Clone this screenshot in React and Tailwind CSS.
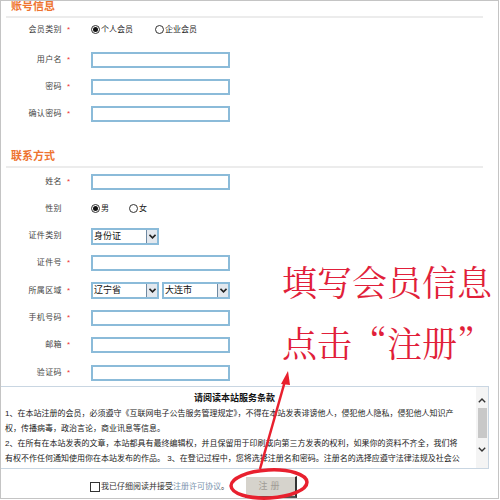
import { useState } from 'react'

const font = { fontFamily: '"Liberation Sans","Noto Sans CJK SC",sans-serif' }

function Radio({ checked }) {
  return (
    <span className="inline-flex w-[9px] h-[9px] rounded-full border border-[#333] bg-white items-center justify-center mr-[1px]">
      {checked && <span className="w-[5px] h-[5px] rounded-full bg-[#111]" />}
    </span>
  )
}

function Field() {
  return <div className="w-[139px] h-[16px] border-2 border-[#8bbbd9] bg-white" />
}

function Select({ value, w }) {
  return (
    <div className={`flex items-center h-[17px] border-2 border-[#8bbbd9] bg-white ${w}`}>
      <span className="flex-1 pl-[1px] text-[9px] text-[#111] leading-none">{value}</span>
      <span className="w-[11px] h-full bg-[#e3e8ee] border-l border-[#6f8aa3] flex items-center justify-center">
        <svg width="7" height="5" viewBox="0 0 7 5"><path d="M0.5 0.8 L3.5 3.8 L6.5 0.8" fill="none" stroke="#222" strokeWidth="1.6" /></svg>
      </span>
    </div>
  )
}

function Row({ label, req = true, h = 'h-[27.3px]', children }) {
  return (
    <div className={`flex items-center ${h}`}>
      <div className="w-[61px] text-right text-[8px] text-[#444] tracking-[0.4px]">{label}</div>
      <div className="w-[29px] pl-[5px] text-[8px] text-[#e33]">{req ? '*' : ''}</div>
      <div className="flex items-center">{children}</div>
    </div>
  )
}

function Heading({ children, className = '' }) {
  return (
    <div className={className}>
      <div className="pl-[10px] text-[11px] leading-[14px] font-bold text-[#ee7430]">{children}</div>
      <div className="ml-[5px] w-[477px] h-[2px] bg-[#ececec] mt-[3px]" />
    </div>
  )
}

export default function App() {
  const [agree] = useState(false)
  const terms = [
    '1、在本站注册的会员，必须遵守《互联网电子公告服务管理规定》，不得在本站发表诽谤他人，侵犯他人隐私，侵犯他人知识产',
    '权，传播病毒，政治言论，商业讯息等信息。',
    '2、在所有在本站发表的文章，本站都具有最终编辑权，并且保留用于印刷或向第三方发表的权利，如果你的资料不齐全，我们将',
    '有权不作任何通知使用你在本站发布的作品。 3、在登记过程中，您将选择注册名和密码。注册名的选择应遵守法律法规及社会公',
  ]

  return (
    <div className="relative w-[500px] h-[500px] overflow-hidden bg-white" style={font}>
      <div className="w-[499px] h-[499px] border border-[#c4c4c4] overflow-hidden">
        {/* 账号信息 */}
        <Heading className="-mt-[2px]">账号信息</Heading>
        <Row label="会员类别" h="h-[23px] mb-[5px]">
          <div className="flex items-center text-[8px] text-[#222]">
            <Radio checked /><span>个人会员</span>
            <span className="ml-[22px]" /><Radio /><span>企业会员</span>
          </div>
        </Row>
        <Row label="用户名"><Field /></Row>
        <Row label="密码"><Field /></Row>
        <Row label="确认密码"><Field /></Row>

        {/* 联系方式 */}
        <Heading className="mt-[21px]">联系方式</Heading>
        <Row label="姓名"><Field /></Row>
        <Row label="性别" req={false}>
          <div className="flex items-center text-[8px] text-[#222]">
            <Radio checked /><span>男</span>
            <span className="ml-[20px]" /><Radio /><span>女</span>
          </div>
        </Row>
        <Row label="证件类别" req={false}><Select value="身份证" w="w-[68px]" /></Row>
        <Row label="证件号"><Field /></Row>
        <Row label="所属区域">
          <div className="flex gap-[3px]">
            <Select value="辽宁省" w="w-[68px]" />
            <Select value="大连市" w="w-[68px]" />
          </div>
        </Row>
        <Row label="手机号码"><Field /></Row>
        <Row label="邮箱"><Field /></Row>
        <Row label="验证码"><Field /></Row>

        {/* 服务条款 */}
        <div className="flex w-[489px] h-[83px] -ml-[1px] border border-[#c9d6e2] overflow-hidden">
          <div className="flex-1 pt-[4px] pl-[4px] text-[8px] leading-[15px] text-[#222] whitespace-nowrap overflow-hidden">
            <div className="text-center text-[9px] font-bold text-[#111] pr-[12px]">请阅读本站服务条款</div>
            {terms.map((t, i) => <div key={i}>{t}</div>)}
          </div>
          <div className="w-[12px] flex flex-col items-center bg-[#f4f4f4]">
            <svg className="mt-[11px]" width="8" height="5" viewBox="0 0 8 5"><path d="M0.8 4.2 L4 1 L7.2 4.2" fill="none" stroke="#333" strokeWidth="1.4" /></svg>
            <div className="mt-[5px] w-[9px] h-[30px] bg-[#c8c8c8]" />
            <svg className="mt-[9px]" width="8" height="5" viewBox="0 0 8 5"><path d="M0.8 0.8 L4 4 L7.2 0.8" fill="none" stroke="#333" strokeWidth="1.4" /></svg>
          </div>
        </div>

        <div className="flex items-center h-[25px] mt-[5px] pl-[89px]">
          <span className="w-[10px] h-[10px] border border-[#333] bg-white">{agree ? '✓' : ''}</span>
          <span className="text-[8px] text-[#333] ml-[1px]">我已仔细阅读并接受</span>
          <span className="text-[8px] text-[#7b93ad]">注册许可协议</span>
          <span className="text-[8px] text-[#333]">。</span>
          <button className="ml-[16px] w-[52px] h-[22px] bg-[#d6d3cc] border-t border-l border-t-white border-l-white border-r-2 border-b-2 border-r-[#333] border-b-[#555] text-[9px] text-[#a09c96] tracking-[3px]">
            注册
          </button>
        </div>
      </div>

      {/* annotation */}
      <div
        className="absolute left-[282px] top-[261px] text-[35px] leading-[41px] text-[#e11f3a] whitespace-nowrap"
        style={{ fontFamily: '"Noto Serif CJK SC","Noto Sans CJK SC",serif' }}
      >
        <div>填写会员信息</div>
        <div className="mt-[20px]">点击“注册”</div>
      </div>
      <svg className="absolute left-0 top-0 pointer-events-none" width="500" height="500">
        <line x1="260" y1="469" x2="285" y2="381" stroke="#e8202e" strokeWidth="2.5" />
        <polygon points="288,371 281,384 290,385" fill="#e8202e" />
        <ellipse cx="269" cy="484" rx="38" ry="14" fill="none" stroke="#e8202e" strokeWidth="3.5" transform="rotate(-3 269 484)" />
      </svg>
    </div>
  )
}
